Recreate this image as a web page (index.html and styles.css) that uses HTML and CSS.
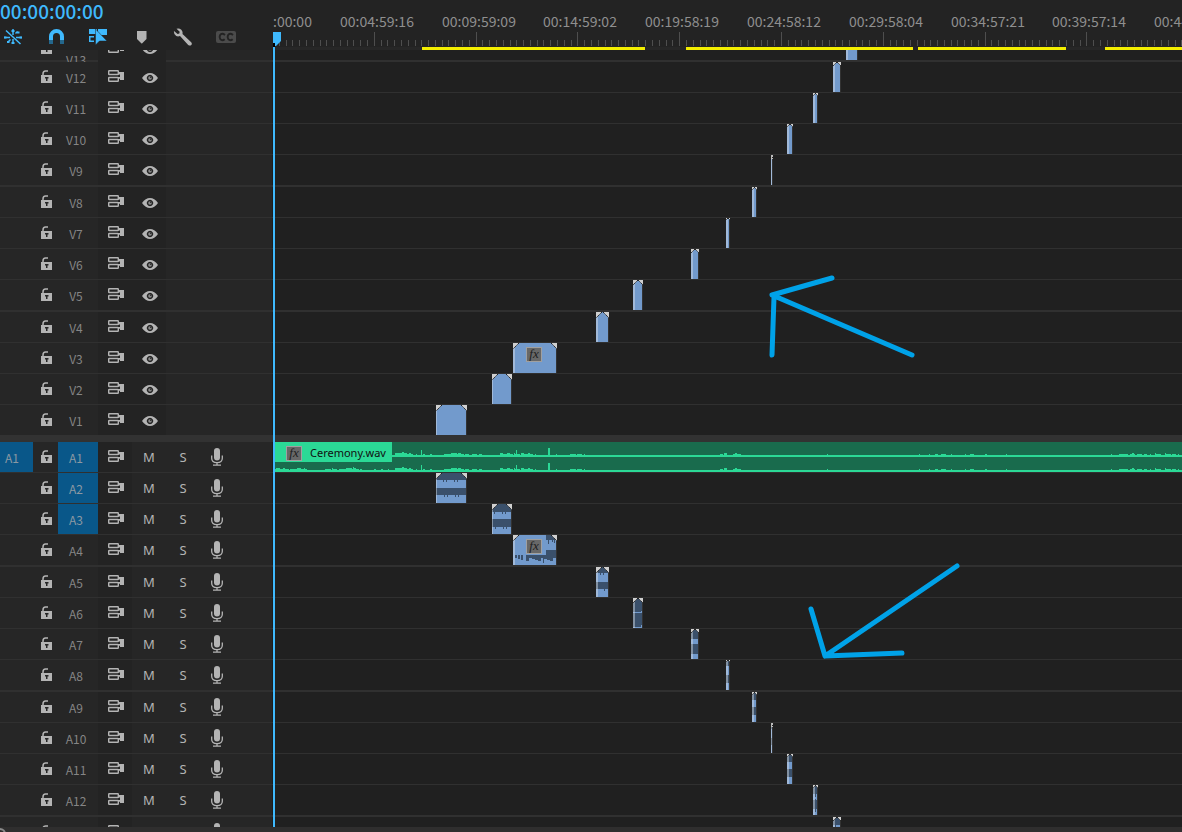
FILE: index.html
```
<!DOCTYPE html>
<html lang="en">
<head>
    <meta charset="UTF-8">
    <title>Timeline</title>
    <link rel="stylesheet" href="styles.css">
</head>
<body>
    <svg class="defs" aria-hidden="true">
        <symbol id="i-lock" viewBox="0 0 12 13">
            <path d="M2 6V4Q2 1 4.500 1H7" fill="none" stroke="currentColor" stroke-width="1.500"/>
            <path fill-rule="evenodd" d="M0 5h11v8H0zM4 7v1.500h1v2.500h1.500V8.500h1V7z" fill="currentColor"/>
        </symbol>
        <symbol id="i-sync" viewBox="0 0 16 12">
            <rect x=".7" y=".7" width="9.600" height="3.800" rx=".5" fill="none" stroke="currentColor" stroke-width="1.400"/>
            <rect x=".7" y="7.500" width="9.600" height="3.800" rx=".5" fill="none" stroke="currentColor" stroke-width="1.400"/>
            <path d="M10 2h6v8h-4V8.700h-2V7h2V4.500h-2z" fill="currentColor"/>
        </symbol>
        <symbol id="i-eye" viewBox="0 0 16 10">
            <path fill-rule="evenodd" d="M0 5Q3.500 0 8 0t8 5q-3.500 5-8 5T0 5zM8 1.800a3.200 3.200 0 1 0 .01 0z" fill="currentColor"/>
            <circle cx="8" cy="5" r="1.800" fill="#8a8a8a"/>
            <circle cx="8.700" cy="4.300" r=".8" fill="#262626"/>
        </symbol>
        <symbol id="i-mic" viewBox="0 0 12 18">
            <rect x="3" y="0" width="6" height="12.500" rx="3" fill="currentColor"/>
            <path d="M.7 7.500v2.700Q.7 14.600 6 14.600t5.300-4.400V7.500M6 14.600V17M2 17.200h8" fill="none" stroke="currentColor" stroke-width="1.300"/>
        </symbol>
    </svg>

    <header class="header">
        <div class="controls">
            <div class="timecode">00:00:00:00</div>
            <div class="tools">
                <button type="button" class="tool on" aria-label="Insert sequences as nests">
                    <svg width="20" height="18" viewBox="0 0 20 18">
                        <path d="M10 1v6M10 11v5M1 9.500h6M13 9.500h6M3 2.500l14.500 13.500M14.500 3.500l-2 2M5 14l2.500-2.500" stroke="currentColor" stroke-width="1.500" fill="none"/>
                        <path d="M8.500 2h3v2h-3zM1 8.500h2.500v2H1zM16.500 8.500H19v2h-2.500zM8.500 14h3v2h-3zM14 3.500h2.500v2H14zM4 13h2.500v2H4z" fill="currentColor"/>
                    </svg>
                </button>
                <button type="button" class="tool on" aria-label="Snap">
                    <svg width="20" height="18" viewBox="0 0 20 18">
                        <path d="M5 12V8.500a5.500 5.500 0 0 1 11 0V12" fill="none" stroke="currentColor" stroke-width="4"/>
                        <path d="M3 12h4v4H3zM14 12h4v4h-4z" fill="#24678c"/>
                    </svg>
                </button>
                <button type="button" class="tool on" aria-label="Linked selection">
                    <svg width="20" height="18" viewBox="0 0 20 18">
                        <path d="M1 1h8v5H1zM10 1h9v6h-9zM1 8h5v1.500H2.500v3H6V14H1z" fill="currentColor"/>
                        <path d="M7.500 1V17l4-4H19z" fill="currentColor" stroke="#232323" stroke-width=".5"/>
                    </svg>
                </button>
                <button type="button" class="tool" aria-label="Add marker">
                    <svg width="20" height="18" viewBox="0 0 20 18">
                        <path d="M6 3h9.500v8l-4.500 4.500h-.5L6 11z" fill="currentColor"/>
                    </svg>
                </button>
                <button type="button" class="tool" aria-label="Timeline display settings">
                    <svg width="20" height="18" viewBox="0 0 20 18">
                        <path d="M3.500 .8L6.700 3.800L6.300 5.400L4.600 5.900L1 3Q.5 6.500 3.200 8Q5 8.900 7 8L15.200 17Q17 18.200 18.300 17Q19.400 15.600 18.200 14.300L9.500 6Q10 3.400 8.300 1.700Q6.200 0 3.500 .8z" fill="currentColor"/>
                    </svg>
                </button>
                <button type="button" class="tool dim" aria-label="Captions">
                    <svg width="20" height="18" viewBox="0 0 20 18">
                        <rect x="0" y="3" width="20" height="12" rx="2" fill="currentColor"/>
                        <path d="M9 7Q5.800 4.500 4 7.200Q3 9.500 4.300 11.200Q6.200 13.300 8.700 11.200M17 7Q13.800 4.500 12 7.200Q11 9.500 12.300 11.200Q14.200 13.300 16.700 11.200" fill="none" stroke="#232323" stroke-width="2"/>
                    </svg>
                </button>
            </div>
        </div>
        <div class="ruler" id="ruler">
            <svg class="ticks" id="ticks"></svg>
            <div class="render" id="render"></div>
        </div>
    </header>

    <main class="sequence">
        <section class="tracks video" id="video" aria-label="Video tracks"></section>
        <div class="divider"></div>
        <section class="tracks audio" id="audio" aria-label="Audio tracks"></section>
    </main>
    <footer class="scroller"><span class="knob"></span></footer>

    <div class="playhead">
        <svg width="8" height="14" viewBox="0 0 8 14">
            <path d="M0 0h8v9l-5 5H0z" fill="#3fb9fd"/>
            <path d="M0 11h2v4H0z" fill="#000"/>
        </svg>
    </div>
    <svg class="notes" aria-hidden="true">
        <g fill="none" stroke="#00a2e8" stroke-width="5" stroke-linecap="round" stroke-linejoin="round">
            <path d="M832 278L772 295L912 355M774 297L772 355"/>
            <path d="M957 566L825 656L811 609M825 656L902 653"/>
        </g>
    </svg>
    <script src="script.js"></script>
</body>
</html>
```
FILE: styles.css
```
* { box-sizing: border-box; }
body {
    display: flex;
    flex-direction: column;
    position: relative;
    height: 100vh;
    margin: 0;
    overflow: hidden;
    background: #202020;
    color: #b4b4b4;
    font-family: "Noto Sans", sans-serif;
    font-size: 12px;
}
svg { display: block; }
.defs {
    position: absolute;
    width: 0;
    height: 0;
}
button {
    display: flex;
    align-items: center;
    justify-content: center;
    padding: 0;
    border: none;
    background: none;
    color: inherit;
    font: inherit;
}

/* header */
.header {
    display: flex;
    flex: none;
    height: 50px;
    background: #232323;
}
.controls {
    flex: none;
    width: 273px;
}
.timecode {
    height: 28px;
    color: #3fb9fd;
    font-family: "Noto Sans CJK SC", sans-serif;
    font-size: 19px;
    font-weight: 500;
    line-height: 22px;
}
.tools {
    display: flex;
    justify-content: space-between;
    width: 236px;
    padding-left: 3px;
}
.tool { width: 20px; height: 18px; }
.tool.on { color: #3fb9fd; }
.tool.dim { color: #4b4b4b; }
.ruler {
    position: relative;
    flex: 1;
    min-width: 0;
    overflow: hidden;
}
.ruler time {
    position: absolute;
    top: 11px;
    width: 80px;
    margin-left: -38px;
    color: #8f8f8f;
    font-family: "Noto Sans CJK SC", sans-serif;
    font-size: 14px;
    line-height: 20px;
    text-align: center;
}
.ticks {
    position: absolute;
    top: 32px;
    width: 100%;
    height: 14px;
    stroke: #4e4e4e;
}
.render {
    position: absolute;
    top: 47px;
    width: 100%;
    height: 3px;
    background: #272727;
}
.render span {
    position: absolute;
    height: 3px;
    background: #f3ee00;
}

/* tracks */
.sequence {
    display: flex;
    flex: 1;
    flex-direction: column;
    min-height: 0;
}
.tracks {
    display: flex;
    flex: 1 1 0;
    flex-direction: column;
    min-height: 0;
    overflow: hidden;
}
.video { justify-content: flex-end; }
.divider {
    flex: none;
    height: 7px;
    background: #323232;
}
.track {
    display: flex;
    flex: none;
    border-bottom: 1px solid #303030;
}
.track.thick { border-bottom-width: 2px; }
.track.last { border-bottom: none; }
.head {
    display: grid;
    flex: none;
    grid-template-columns: 33px 25px 40px 34px 34px 34px 34px 1fr;
    width: 273px;
    height: 30px;
    background: #262626;
    border-right: 1px solid #1d1d1d;
}
.tall .head { height: 34px; }
.head > * {
    display: flex;
    align-items: center;
    justify-content: center;
}
.name, .source {
    padding: 1px 4px 0 0;
    color: #858585;
    font-family: "Noto Sans CJK SC", sans-serif;
    line-height: 18px;
}
.source { padding-right: 9px; }
.targeted {
    background: #095789;
    color: #8b99a3;
}
.tall .name {
    align-items: flex-start;
    padding-top: 25px;
}
.shade { background: #232323; }
.lock { padding: 0 0 1px 3px; }
.sync { padding: 0 0 2px 2px; }
.toggle { padding: 2px 0 0 2px; }
.letter {
    padding: 0;
    font-size: 13px;
}
.lane {
    position: relative;
    flex: 1;
    min-width: 0;
    overflow: hidden;
}
.clip {
    position: absolute;
    top: 0;
    height: 30px;
}
.tall .clip { top: 4px; }
.fx {
    position: absolute;
    top: 4px;
    left: 13px;
    width: 16px;
    height: 15px;
    border: 1px solid #a0a0a0;
    background: #686868;
    color: #202020;
    font-family: "Liberation Serif", serif;
    font-size: 13px;
    font-style: italic;
    line-height: 12px;
    text-align: center;
}
.wav {
    right: 0;
    left: 2px;
    overflow: hidden;
    background: #196b4d;
}
.wav .title {
    position: absolute;
    top: 0;
    left: 0;
    width: 117px;
    height: 20px;
    padding-left: 35px;
    background: #2bd996;
    color: #101010;
    font-size: 11px;
    line-height: 22px;
    white-space: nowrap;
}
.wav .fx { left: 11px; }
.wav svg { fill: #2bd996; }

.scroller {
    flex: none;
    height: 5px;
    overflow: hidden;
    background: #2f2e2e;
}
.knob {
    display: block;
    width: 12px;
    height: 12px;
    margin: 1px 0 0 -6px;
    border: 2px solid #8a8a8a;
    border-radius: 50%;
}

/* over the tracks */
.playhead {
    position: absolute;
    top: 32px;
    bottom: 5px;
    left: 273px;
    width: 2px;
    background: #3fb9fd;
}
.playhead svg { overflow: visible; }
.notes {
    position: absolute;
    top: 0;
    left: 0;
    width: 100%;
    height: 100%;
    pointer-events: none;
}
```
FILE: script.js
```
// clip positions are pixels from the left edge of the lanes
const clips = {
    13: [573, 11], 12: [560, 7], 11: [540, 4], 10: [514, 5], 9: [498, 1], 8: [479, 4],
    7: [453, 3], 6: [418, 7], 5: [360, 9], 4: [323, 12], 3: [240, 43], 2: [219, 19], 1: [163, 30]
};
// [left, width, top of wave in left channel, top of wave in right channel]
const sounds = {
    2: [163, 30, 7, 22], 3: [219, 19, 8, 23], 4: [240, 43, 8, 21], 5: [323, 12, 6, 22],
    6: [360, 9, 14, 29], 7: [418, 7, 10, 25], 8: [453, 3, 6, 23], 9: [479, 4, 8, 23],
    10: [498, 1, 6, 22], 11: [514, 5, 8, 23], 12: [540, 4, 9, 24], 13: [560, 7, 8, 23]
};

const icon = (name, w, h) => `<svg width="${w}" height="${h}"><use href="#i-${name}"/></svg>`;
const rect = (x, y, w, h, fill) => `<rect x="${x}" y="${y}" width="${w}" height="${h}" fill="${fill}"/>`;

function wave(w, top, dark) {
    let out = '';
    for (let x = 2; x < w - 2; x += 1) {
        if ((x * 7 + top) % 11 < 2) out += rect(x, top, 1, 2, dark);
    }
    return out;
}

function drawClip(c, audio, n) {
    const [x, w, a, b] = c;
    const edge = w > 15 && w < 40 ? 1 : Math.min(2, w);
    const dark = '#3a506b';
    let s = rect(0, 0, w, 30, '#729acc');
    if (audio && n === 4) {
        s += rect(33, 0, w - 33, 5, dark) + rect(33, 15, w - 33, 6, dark);
        s += rect(35, 5, 1, 4, dark) + rect(39, 5, 1, 2, dark) + rect(41, 5, 1, 3, dark);
        [2, 5, 8, 13, 16, 19, 22, 25, 28, 31, 34, 37, 40].forEach((p, i) => {
            s += rect(p, 20, i < 3 ? 2 : 3, 3 + (i * 5) % 4, dark);
        });
        s += rect(30, 23, 1, 5, dark);
    } else if (audio) {
        s += rect(0, 0, w, a, dark) + rect(0, 15, w, b - 15, dark);
        if (n !== 6 && w > 6) s += wave(w, a, dark) + wave(w, b, dark);
        if (n === 6) s += rect(8, 13, 1, 2, '#729acc') + rect(8, 27, 1, 2, '#729acc');
        if (n === 12) s += rect(2, 0, 1, 12, dark) + rect(2, 14, 1, 13, dark);
    }
    s += rect(0, 0, edge, 30, 'rgba(220,225,230,.45)') + rect(w, 0, 1, 30, '#323232');
    // fade handles in the corners
    const k = Math.min(6, Math.ceil((w + 1) / 2));
    const r = w + 1;
    if (w > 2) {
        s += `<path d="M0 0h${k}L0 ${k}zM${r} 0h-${k}L${r} ${k}z" fill="#cfcfcf"/>
            <path d="M${k} 0L0 ${k}M${r - k} 0L${r} ${k}" stroke="#222" stroke-dasharray="1.500 .5"/>`;
    } else {
        s += rect(0, 0, 2, 4, '#bdbdbd') + rect(1, 2, 1, 1, '#222');
    }
    const fx = n === (audio ? 4 : 3) ? '<span class="fx">fx</span>' : '';
    return `<div class="clip" style="left:${x}px"><svg width="${w + 1}" height="30">${s}</svg>${fx}</div>`;
}

// the long ceremony recording, both channels share one shape
function ceremony() {
    const quiet = [[445, 3], [458, 8], [462, 2], [552, 1], [644, 1], [654, 1], [660, 3], [666, 5], [676, 1],
        [690, 1], [695, 4], [710, 2], [731, 1], [836, 1], [844, 9], [855, 5], [862, 5], [869, 3], [875, 1],
        [880, 6], [891, 5], [897, 4], [903, 1]];
    let bars = '';
    for (let x = 0; x < 330; x += 1) {
        const swell = Math.sin(x / 9) + Math.sin(x / 4 + 1) * .7 + ((x * 13) % 7) / 5;
        const h = Math.max(0, Math.min(3, Math.round(swell)));
        if (h && x < 270) bars += `M${x} 13v-${h}h1v${h}z`;
        else if (h > 1) bars += `M${x} 13v-1h1v1z`;
    }
    bars += 'M146 13v-5h1v5zM241 13v-5h1v5zM273 13v-7h2v7z';
    quiet.forEach(([x, w]) => {
        bars += `M${x} 13v-1h${w}v1z`;
    });
    bars += 'M449 13v-2h3v2zM460 13v-2h2v2zM857 13v-2h2v2zM880 13v-2h1v2zM890 13v-2h1v2z';
    return `<div class="clip wav">
        <svg width="907" height="30"><path d="${bars}"/><path d="${bars}" transform="translate(0 15)"/></svg>
        <svg class="base"></svg>
        <div class="title"><span class="fx">fx</span>Ceremony.wav</div>
    </div>`;
}

function addTrack(kind, n) {
    const audio = kind === 'A';
    const on = audio && n <= 3;
    const name = kind + n;
    const row = document.createElement('div');
    row.className = 'track';
    if (audio ? n % 4 === 0 : n % 4 === 1 && n > 1) row.classList.add('thick');
    if (!audio && n === 1) row.classList.add('last');
    if (name === 'V13') row.classList.add('tall');
    const controls = audio
        ? `<button type="button" class="letter" aria-label="Mute ${name}">M</button>
           <button type="button" class="letter" aria-label="Solo ${name}">S</button>
           <button type="button" aria-label="Voice-over record ${name}">${icon('mic', 12, 18)}</button>`
        : `<button type="button" class="shade toggle" aria-label="Toggle output ${name}">${icon('eye', 16, 10)}</button>`;
    const clip = audio ? (n === 1 ? ceremony() : drawClip(sounds[n], true, n)) : drawClip(clips[n], false, n);
    row.innerHTML = `<div class="head">
            ${audio && n === 1 ? '<button type="button" class="source targeted">A1</button>' : '<span></span>'}
            <button type="button" class="lock" aria-label="Lock ${name}">${icon('lock', 12, 13)}</button>
            <button type="button" class="name${on ? ' targeted' : ''}">${name}</button>
            <button type="button" class="shade sync" aria-label="Sync lock ${name}">${icon('sync', 16, 12)}</button>
            ${controls}
        </div>
        <div class="lane">${clip}</div>`;
    document.getElementById(audio ? 'audio' : 'video').append(row);
}

for (let n = 13; n >= 1; n--) addTrack('V', n);
for (let n = 1; n <= 13; n++) addTrack('A', n);

// base line of each channel follows the width of the lane
document.querySelector('.base').outerHTML =
    '<svg class="clip" width="100%" height="30"><rect y="13" width="100%" height="2"/><rect y="28" width="100%" height="2"/></svg>';

// ruler
const times = ['00:00:00:00', '00:04:59:16', '00:09:59:09', '00:14:59:02', '00:19:58:19',
    '00:24:58:12', '00:29:58:04', '00:34:57:21', '00:39:57:14', '00:44:57:07'];
const step = 101.8;
const ruler = document.getElementById('ruler');
times.forEach((t, i) => {
    const el = document.createElement('time');
    el.textContent = t;
    el.style.left = Math.round(i * step) + 'px';
    ruler.append(el);
});
let ticks = '';
for (let i = 1; i < 150; i++) {
    ticks += `M${Math.floor(i * step / 15 - .5) + .5} ${i % 15 ? 8 : 0}V14`;
}
document.getElementById('ticks').innerHTML = `<path d="${ticks}"/>`;
document.getElementById('render').innerHTML = [[149, 223], [413, 227], [645, 148], [832, 400]]
    .map(([x, w]) => `<span style="left:${x}px;width:${w}px"></span>`).join('');
```
